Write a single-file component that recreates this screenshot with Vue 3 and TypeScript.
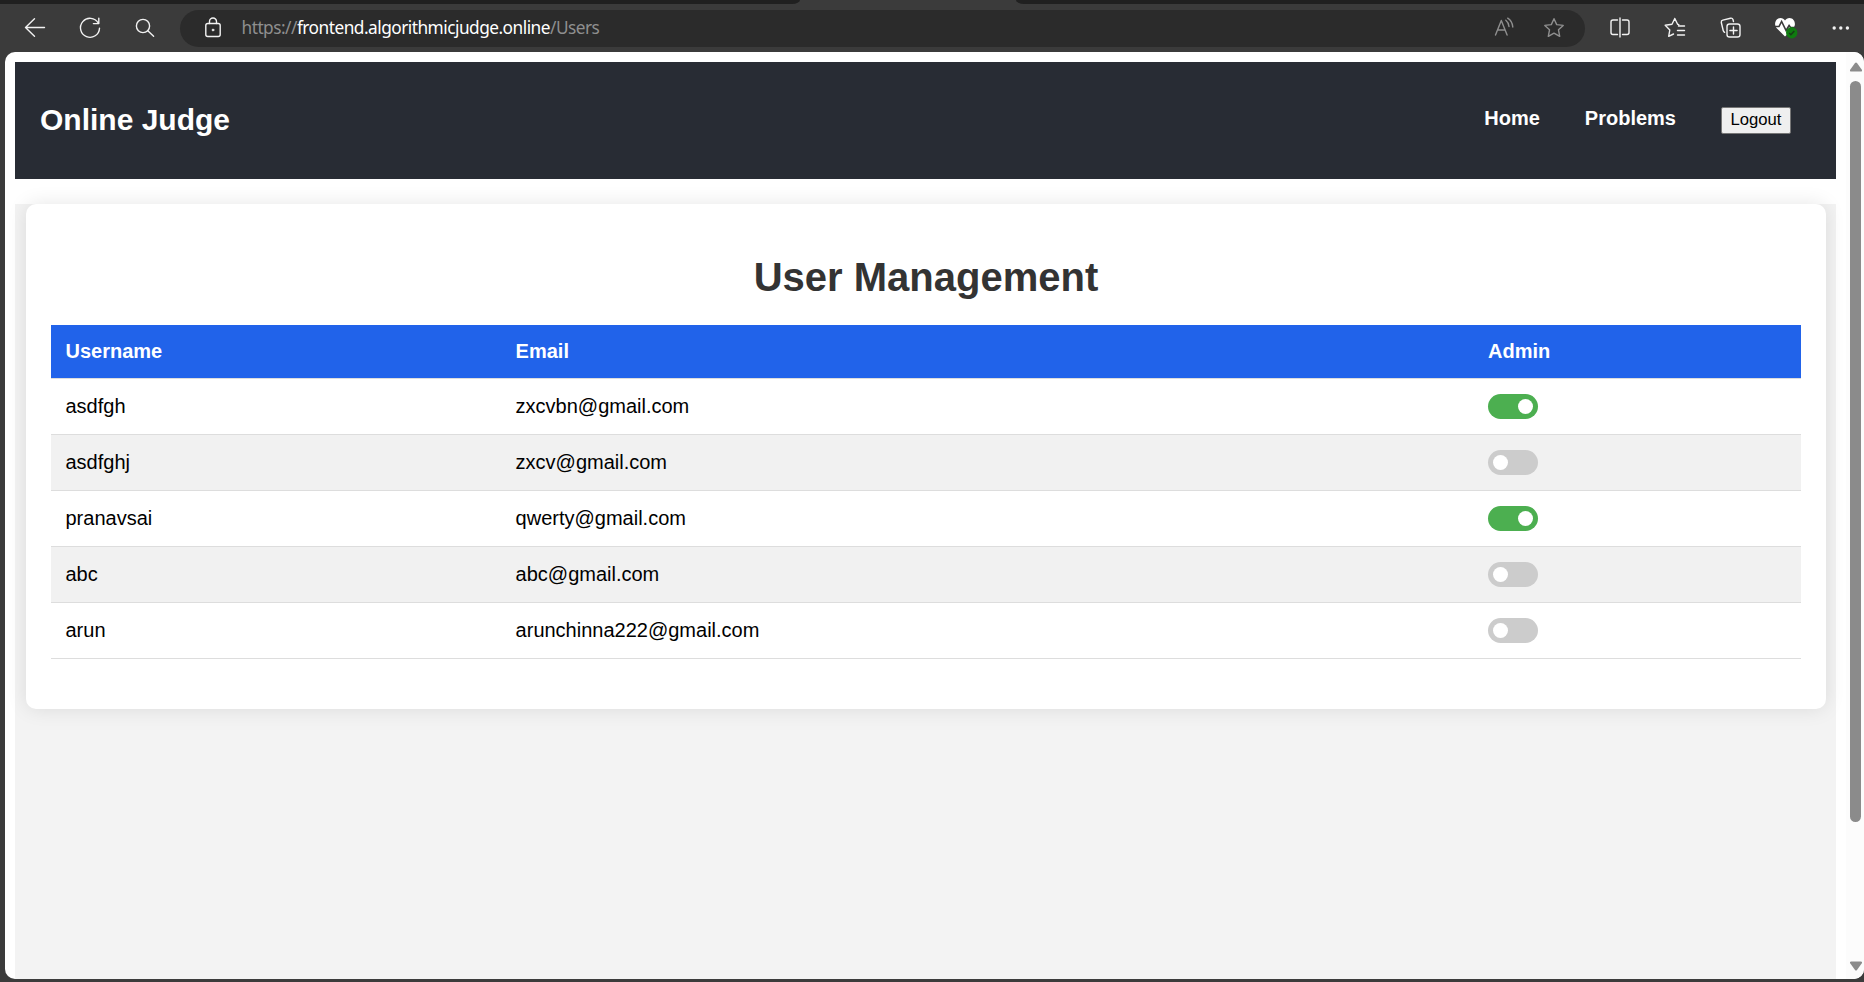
<script setup lang="ts">
import { ref } from 'vue'

interface User {
  username: string
  email: string
  admin: boolean
}

const users = ref<User[]>([
  { username: 'asdfgh', email: 'zxcvbn@gmail.com', admin: true },
  { username: 'asdfghj', email: 'zxcv@gmail.com', admin: false },
  { username: 'pranavsai', email: 'qwerty@gmail.com', admin: true },
  { username: 'abc', email: 'abc@gmail.com', admin: false },
  { username: 'arun', email: 'arunchinna222@gmail.com', admin: false },
])
</script>

<template>
  <div class="browser">
    <div class="tabstrip">
      <div class="tabs-left"></div>
      <div class="tabs-right"></div>
    </div>
    <div class="toolbar">
      <div class="nav-icons">
        <svg width="24" height="24" viewBox="0 0 24 24" class="icon"><path d="M21.500 11.500H2.500M11.500 2.800L2.500 11.500l9 8.700" /></svg>
        <svg width="24" height="24" viewBox="0 0 24 24" class="icon"><path d="M20.200 7A9.500 9.500 0 1 0 21.500 12.200M20.800 2.200V7.600H15.400" /></svg>
        <svg width="24" height="24" viewBox="0 0 24 24" class="icon"><circle cx="10" cy="10" r="6.600" /><path d="M14.800 14.800L20.600 20.300" /></svg>
      </div>
      <div class="address">
        <svg width="24" height="24" viewBox="0 0 24 24" class="icon lock"><rect x="4.800" y="7.500" width="14.400" height="13" rx="2" /><path d="M8.500 7.500V5.500a3.500 3.500 0 0 1 7 0v2" /><circle cx="12" cy="14" r="1" class="dot" /></svg>
        <span class="url"><span class="scheme">https://</span><span class="host">frontend.algorithmicjudge.online</span><span class="path">/Users</span></span>
        <svg width="24" height="24" viewBox="0 0 24 24" class="icon dim read"><path d="M2.500 19L8.300 4.500 14.100 19M4.500 14H12.100M12.800 4.200Q15.600 6.400 16 10.500M14.700 2.200Q19.400 5.300 19.800 11" /></svg>
        <svg width="24" height="24" viewBox="0 0 24 24" class="icon dim star"><path d="M12 2.700l2.700 5.900 6.500.8-4.700 4.400 1.200 6.500L12 17.100l-5.700 3.200 1.200-6.500L2.800 9.400l6.500-.8z" /></svg>
      </div>
      <div class="actions">
        <svg width="24" height="24" viewBox="0 0 24 24" class="icon"><path d="M9.500 4H5A2 2 0 0 0 3 6v10.500a2 2 0 0 0 2 2H9.500M14.500 4H19a2 2 0 0 1 2 2v10.500a2 2 0 0 1-2 2H14.500M12 2V21" /></svg>
        <svg width="24" height="24" viewBox="0 0 24 24" class="icon"><path d="M15.800 8.600L14.600 8.300 11.800 2.500 9 8.300 2.200 9.300 6.800 14 5.700 20.300 10.500 18M15.500 10H21.500M14.500 14.500H21.500M14.500 19H21.500" /></svg>
        <svg width="24" height="24" viewBox="0 0 24 24" class="icon"><rect x="8" y="8" width="13" height="13" rx="2.600" /><path d="M14.500 10.900v7.200M10.900 14.500h7.200M5.600 16.300Q4.500 15.700 4.200 14.500L2.300 6.500Q2 4.700 3.800 4.200L11.500 2.200Q13.300 1.800 14 3.600L14.500 5.500" /></svg>
        <svg width="26" height="26" viewBox="0 0 26 26" class="heart"><path class="heart-fill" d="M12 21.600L3.500 13C.5 9.500 2.500 3 7.500 3c2 0 3.500 1 4.500 2.500C13 4 14.500 3 16.500 3c5 0 7 6.500 4 10z" /><path class="pulse" d="M1.500 11.500H6L8.600 6.500l4.500 9 3-5 1.500 2h5" /><circle class="badge" cx="18.700" cy="17.800" r="5.700" /><path class="tick" d="M16.200 18l1.700 1.700 3.400-3.700" /></svg>
        <svg width="24" height="24" viewBox="0 0 24 24" class="more"><circle cx="5.200" cy="12" r="1.700" /><circle cx="11.800" cy="12" r="1.700" /><circle cx="18.400" cy="12" r="1.700" /></svg>
      </div>
    </div>

    <div class="viewport">
      <div class="page">
        <nav class="navbar">
          <div class="brand">Online Judge</div>
          <div class="links">
            <a>Home</a>
            <a>Problems</a>
            <button type="button" class="logout">Logout</button>
          </div>
        </nav>
        <main class="content">
          <section class="card">
            <h1>User Management</h1>
            <table>
              <colgroup>
                <col class="col-name" />
                <col class="col-email" />
                <col />
              </colgroup>
              <thead>
                <tr><th>Username</th><th>Email</th><th>Admin</th></tr>
              </thead>
              <tbody>
                <tr v-for="user in users" :key="user.username">
                  <td>{{ user.username }}</td>
                  <td>{{ user.email }}</td>
                  <td>
                    <div class="switch" :class="{ on: user.admin }" @click="user.admin = !user.admin">
                      <span class="knob"></span>
                    </div>
                  </td>
                </tr>
              </tbody>
            </table>
          </section>
        </main>
      </div>
      <div class="scrollbar">
        <svg width="14" height="10" viewBox="0 0 14 10"><path d="M6 1Q7 0 8 1L13 8Q13.500 9.500 12 9.500H2Q.5 9.500 1 8z" /></svg>
        <div class="thumb"></div>
        <svg width="14" height="10" viewBox="0 0 14 10"><path d="M6 9Q7 10 8 9L13 2Q13.500.5 12 .5H2Q.5.500 1 2z" /></svg>
      </div>
    </div>
  </div>
</template>

<style>
body {
  margin: 0;
  overflow: hidden;
}
</style>

<style scoped>
.browser {
  width: 1864px;
  height: 982px;
  box-sizing: border-box;
  padding-bottom: 3px;
  display: flex;
  flex-direction: column;
  background: #3b3b3b;
  font-family: "Liberation Sans", Arial, sans-serif;
  overflow: hidden;
}
.tabstrip {
  height: 4px;
  flex: none;
  display: flex;
  justify-content: space-between;
}
.tabs-left {
  width: 800px;
  background: #202020;
  border-bottom-right-radius: 8px 4px;
}
.tabs-right {
  width: 848px;
  background: #202020;
  border-bottom-left-radius: 8px 4px;
}
.toolbar {
  height: 48px;
  flex: none;
  display: flex;
  align-items: center;
}
.icon {
  flex: none;
  fill: none;
  stroke: #f2f2f2;
  stroke-width: 1.4;
  stroke-linecap: round;
  stroke-linejoin: round;
}
.icon.dim {
  stroke: #8f8f8f;
}
.icon .dot {
  fill: #f2f2f2;
  stroke-width: 0.6;
}
.nav-icons {
  width: 180px;
  box-sizing: border-box;
  padding-left: 23px;
  display: flex;
  gap: 31px;
}
.address {
  width: 1405px;
  height: 37px;
  box-sizing: border-box;
  padding: 0 19px 0 20.5px;
  border-radius: 19px;
  background: #2b2b2b;
  display: flex;
  align-items: center;
}
.url {
  margin: -1px 0 0 17px;
  flex: 1;
  font: 17.3px/24px "Noto Sans", "Open Sans", sans-serif;
  letter-spacing: -0.52px;
  white-space: nowrap;
  color: #8f8f8f;
}
.host {
  color: #ffffff;
}
.read {
  margin-right: 25px;
}
.actions {
  margin-left: 22.5px;
  display: flex;
  align-items: center;
  gap: 31.5px;
}
.heart {
  flex: none;
  margin: 0 -2px 0 -1px;
  fill: none;
}
.heart-fill {
  fill: #ffffff;
}
.pulse {
  stroke: #3b3b3b;
  stroke-width: 1.6;
}
.badge {
  fill: #0f7b10;
}
.tick {
  stroke: #173b17;
  stroke-width: 1.5;
}
.more {
  flex: none;
  fill: #f2f2f2;
}

.viewport {
  flex: 1;
  min-height: 0;
  margin-left: 5px;
  background: #ffffff;
  border-radius: 10px;
  display: flex;
  overflow: hidden;
}
.page {
  flex: 1;
  padding: 10px 10px 0;
  display: flex;
  flex-direction: column;
}
.navbar {
  height: 117px;
  flex: none;
  box-sizing: border-box;
  padding: 0 45px 0 25px;
  background: #282c34;
  color: #ffffff;
  display: flex;
  align-items: center;
  justify-content: space-between;
}
.brand {
  margin-top: -2px;
  font-size: 30px;
  font-weight: bold;
}
.links {
  display: flex;
  align-items: center;
  gap: 45px;
  font-size: 20px;
  font-weight: bold;
}
.links a {
  margin-top: -5px;
}
.logout {
  width: 70px;
  height: 27px;
  margin: 0;
  padding: 0 0 2px;
  border: 1px solid #767676;
  border-radius: 2px;
  background: #efefef;
  color: #000000;
  font: 16.67px "Liberation Sans", Arial, sans-serif;
}
.content {
  margin-top: 25px;
  flex: 1;
  background: #f3f3f3;
}
.card {
  height: 505px;
  margin: 0 10px 0 11px;
  padding: 1px 25px 0;
  box-sizing: border-box;
  border-radius: 10px;
  background: #ffffff;
  box-shadow: 0 0 20px rgba(0, 0, 0, 0.1);
}
h1 {
  margin: 49px 0 25px;
  font-size: 40px;
  line-height: 46px;
  text-align: center;
  color: #333333;
}
table {
  width: 1750px;
  table-layout: fixed;
  border-collapse: separate;
  border-spacing: 0;
  font-size: 20px;
  line-height: 23px;
  color: #000000;
}
.col-name {
  width: 449px;
}
.col-email {
  width: 973px;
}
th,
td {
  height: 56px;
  box-sizing: border-box;
  padding: 0 15px;
  border-bottom: 1px solid #dddddd;
  text-align: left;
  vertical-align: middle;
}
th:first-child,
td:first-child {
  padding-left: 14.5px;
}
th:nth-child(2),
td:nth-child(2) {
  padding-left: 15.6px;
}
th {
  height: 54px;
  background: #2163ea;
  background-clip: padding-box;
  color: #ffffff;
}
tbody tr:nth-child(even) {
  background: #f1f1f1;
}
.switch {
  width: 50px;
  height: 25px;
  box-sizing: border-box;
  padding: 5px;
  border-radius: 13px;
  background: #cccccc;
  display: flex;
}
.switch.on {
  background: #4caf50;
  justify-content: flex-end;
}
.knob {
  width: 15px;
  height: 15px;
  border-radius: 50%;
  background: #ffffff;
}
.scrollbar {
  width: 18px;
  box-sizing: border-box;
  padding: 10px 0 8px 1px;
  background: #fcfcfc;
  display: flex;
  flex-direction: column;
  align-items: center;
  justify-content: space-between;
  fill: #8b8b8b;
}
.thumb {
  width: 11px;
  height: 741px;
  margin: 9px 0 auto;
  border-radius: 6px;
  background: #8b8b8b;
}
</style>
